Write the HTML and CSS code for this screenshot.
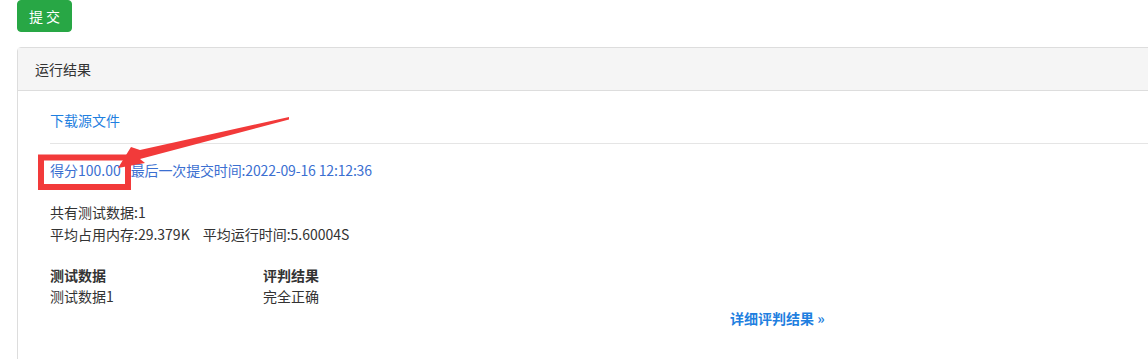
FILE: index.html
```html
<!DOCTYPE html>
<html lang="zh">
<head>
<meta charset="utf-8">
<link rel="stylesheet" href="styles.css">
</head>
<body>
<div class="page">
  <button class="btn-submit">提 交</button>
  <div class="panel">
    <div class="panel-heading">运行结果</div>
    <div class="panel-body">
      <a class="link" href="#">下载源文件</a>
      <hr class="divider">
      <div class="score-line">
        <span class="score">得分100.00</span>
        <span class="time">最后一次提交时间:2022-09-16 12:12:36</span>
      </div>
      <div class="stats">
        <div>共有测试数据:1</div>
        <div><span class="mem">平均占用内存:29.379K</span>平均运行时间:5.60004S</div>
      </div>
      <div class="table">
        <div class="row head"><span class="c1">测试数据</span><span>评判结果</span></div>
        <div class="row"><span class="c1">测试数据1</span><span>完全正确</span></div>
      </div>
      <div class="more"><a class="link bold" href="#">详细评判结果 »</a></div>
    </div>
  </div>
  <svg class="annot" width="300" height="200" viewBox="0 0 300 200">
    <polygon points="289,117 140,150 131,147 118,168 145,163 140,159 289,119.5" fill="#f23a3a"/>
    <rect x="41" y="157.5" width="87" height="29.5" fill="none" stroke="#f23a3a" stroke-width="6"/>
  </svg>
</div>
</body>
</html>
```
FILE: styles.css
```css
* { box-sizing: border-box; }
html, body { margin: 0; padding: 0; background: #fff; }
body {
  font-family: "Microsoft YaHei", "Noto Sans CJK SC", sans-serif;
  font-size: 14px;
  color: #333;
  overflow: hidden;
}
.page {
  position: relative;
  padding-left: 17px;
  width: 1200px;
  height: 359px;
  overflow: hidden;
}
.btn-submit {
  display: block;
  width: 55px;
  height: 32px;
  margin: 0;
  padding: 0;
  border: 1px solid #28a745;
  border-radius: 4px;
  background: #28a745;
  color: #fff;
  font-family: inherit;
  font-size: 14px;
  line-height: 30px;
}
.panel {
  margin-top: 15px;
  border: 1px solid #ddd;
  border-radius: 4px 0 0 4px;
  height: 330px;
}
.panel-heading {
  height: 43px;
  padding: 0 17px;
  background: #f5f5f5;
  border-bottom: 1px solid #ddd;
  line-height: 42px;
}
.panel-body {
  padding: 19px 0 0 32px;
}
.link {
  color: #1f7fe0;
  text-decoration: none;
  line-height: 20px;
  display: inline-block;
}
.bold { font-weight: bold; }
.divider {
  border: 0;
  border-top: 1px solid #e5e5e5;
  margin: 13px 0 15px 0;
}
.score-line {
  display: flex;
  gap: 10px;
  line-height: 22px;
  color: #3b6fd1;
}
.time { letter-spacing: -0.15px; }
.stats {
  margin-top: 20px;
  line-height: 22px;
}
.mem { margin-right: 13px; }
.table { margin-top: 20px; line-height: 21px; }
.row { display: flex; }
.row.head { font-weight: bold; }
.c1 { width: 213px; }
.more {
  padding-left: 680px;
  margin-top: 1px;
}
.annot {
  position: absolute;
  left: 0;
  top: 0;
  pointer-events: none;
}
```
